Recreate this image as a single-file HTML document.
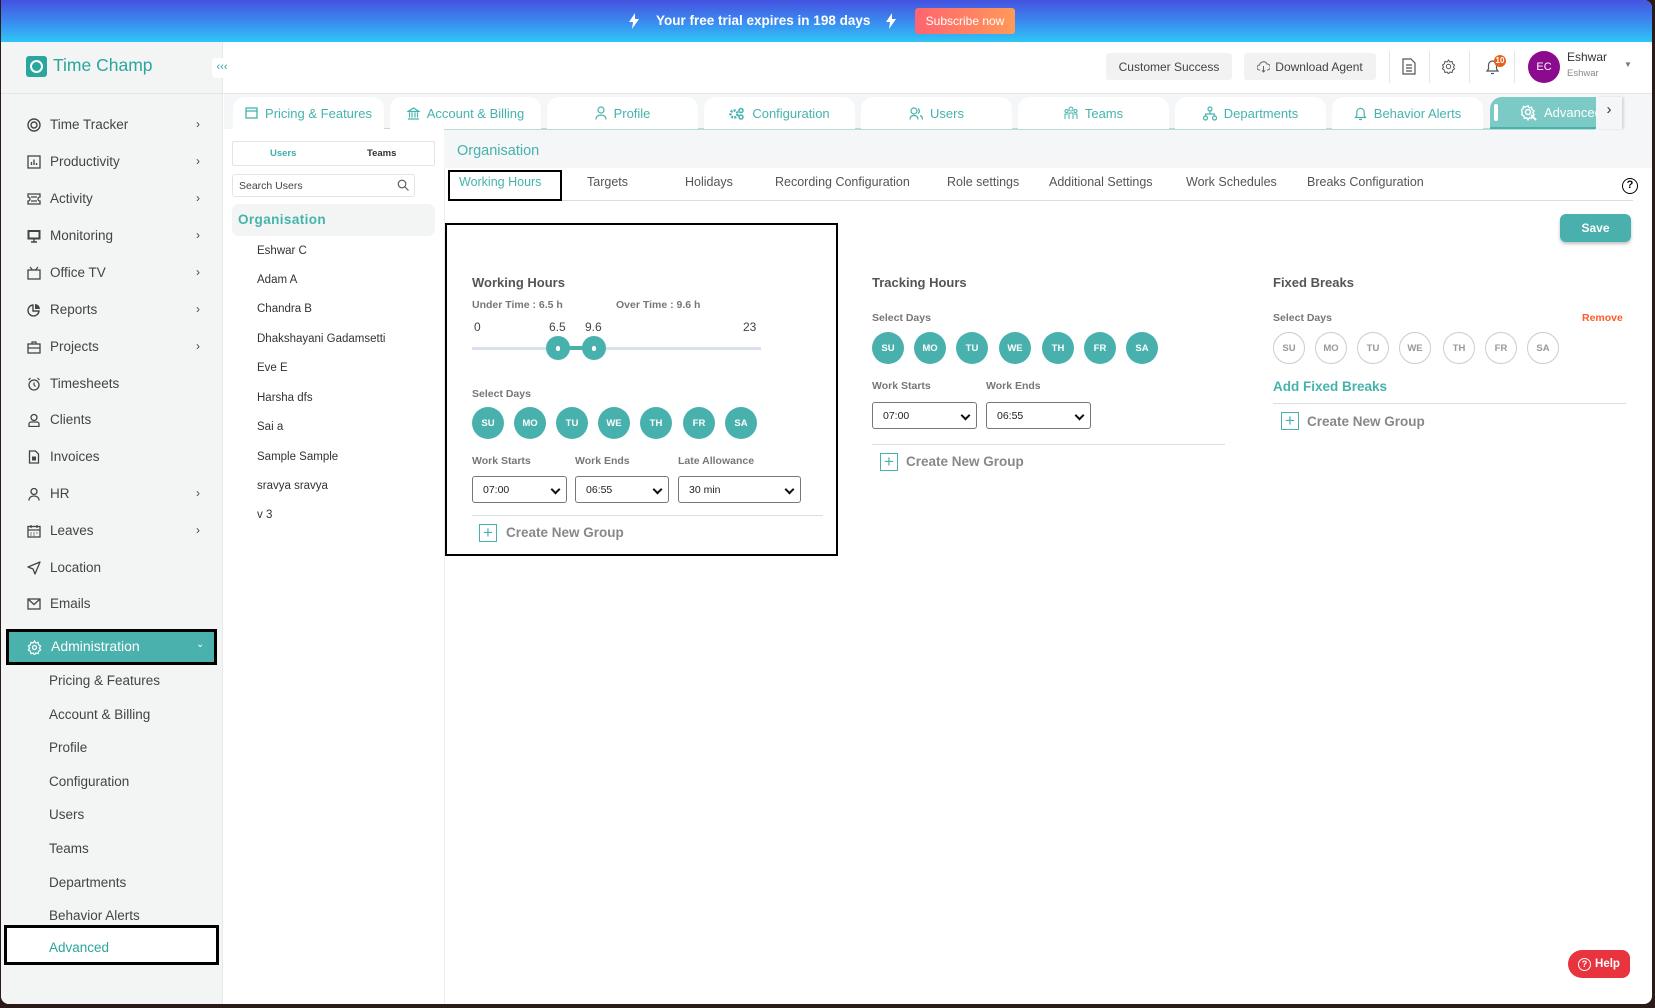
<!DOCTYPE html>
<html><head><meta charset="utf-8"><style>
*{box-sizing:border-box;margin:0;padding:0}
body{width:1655px;height:1008px;background:#2a1a18;font-family:"Liberation Sans",sans-serif;overflow:hidden;position:relative}
#app{position:absolute;left:1px;top:0;width:1651px;height:1004px;background:#fff;border-radius:0 8px 8px 8px;overflow:hidden}
.a{position:absolute;white-space:nowrap}
.banner{left:0;top:0;width:1651px;height:42px;background:linear-gradient(180deg,#4552e0 0%,#3a8ef0 55%,#2ec6f6 100%)}
.side{left:0;top:42px;width:222px;height:962px;background:#f3f4f4;border-right:1px solid #e8eaea}
.nav{left:49px;font-size:13.5px;color:#444}
.ico{left:26px;width:14px;height:14px}
.chev{left:195px;font-size:12px;color:#444}
.sub{left:48px;font-size:13.5px;color:#444}
.tab{top:97px;height:32px;width:151px;background:#fff;border-radius:12px 12px 0 0;color:#45b3ad;font-size:13px;display:flex;align-items:center;justify-content:center;gap:7px}
.st{top:175px;font-size:12.5px;color:#555}
.lbl{font-size:10.5px;color:#777;font-weight:bold}
.h{font-size:13px;color:#555;font-weight:bold}
.day{width:32px;height:32px;border-radius:50%;background:#49b1ad;color:#fff;font-size:9.5px;font-weight:bold;display:flex;align-items:center;justify-content:center}
.dayo{width:32px;height:32px;border-radius:50%;border:1.3px solid #ccc;color:#999;font-size:9.5px;font-weight:bold;display:flex;align-items:center;justify-content:center}
.sel{height:27px;border:1px solid #777;border-radius:3px;font-size:10.5px;color:#222;padding-left:10px;display:flex;align-items:center}
.sel:after{content:"";position:absolute;right:7px;top:9px;width:5px;height:5px;border-right:2px solid #111;border-bottom:2px solid #111;transform:rotate(45deg)}
.cng{font-size:13.5px;color:#888;font-weight:bold}
.plus{width:18px;height:18px;border:1.3px solid #49b1ad;color:#49b1ad;font-size:17px;line-height:15px;text-align:center}
.name{left:256px;font-size:11.5px;color:#333}
</style></head><body><div id="app">
<div class="a banner"></div>
<svg class="a" style="left:627px;top:13px" width="12" height="16" viewBox="0 0 12 16"><path d="M7 0L1 9h4l-1 7 7-10H7z" fill="#fff"/></svg>
<div class="a" style="left:655px;top:13px;color:#fff;font-weight:bold;font-size:13.5px">Your free trial expires in 198 days</div>
<svg class="a" style="left:884px;top:13px" width="12" height="16" viewBox="0 0 12 16"><path d="M7 0L1 9h4l-1 7 7-10H7z" fill="#fff"/></svg>
<div class="a" style="left:914px;top:8px;width:100px;height:26px;border-radius:3px;background:linear-gradient(90deg,#ff6470,#ff9a58);color:#fff;font-size:12px;display:flex;align-items:center;justify-content:center">Subscribe now</div>

<div class="a side"></div>
<div class="a" style="left:0;top:93px;width:1651px;height:1px;background:#e4e6e6"></div>
<div class="a" style="left:25px;top:56px;width:21px;height:21px;background:#2aa69f;border-radius:3px"></div>
<div class="a" style="left:29px;top:60px;width:13px;height:13px;border:2px solid #fff;border-radius:50%"></div>
<div class="a" style="left:52px;top:55px;font-size:17.5px;color:#2aa69f">Time Champ</div>
<div class="a" style="left:211px;top:58px;width:20px;height:20px;background:#fff;border-radius:4px;color:#2aa69f;font-size:11px;text-align:center;line-height:19px">&lsaquo;&lsaquo;&lsaquo;</div>

<div class="a" style="left:1105px;top:53px;width:126px;height:27px;background:#f2f2f2;border-radius:3px;font-size:12px;color:#444;display:flex;align-items:center;justify-content:center">Customer Success</div>
<div class="a" style="left:1243px;top:53px;width:132px;height:27px;background:#f2f2f2;border-radius:3px;font-size:12px;color:#444;display:flex;align-items:center;justify-content:center;gap:5px"><svg width="13" height="12" viewBox="0 0 13 12"><path d="M3 9H2.5a2.5 2.5 0 010-5 4 4 0 017.5-1 2.5 2.5 0 01.5 6H10M6.5 5v6M4.8 9.3l1.7 1.7 1.7-1.7" stroke="#666" fill="none"/></svg>Download Agent</div>
<div class="a" style="left:1388px;top:51px;width:1px;height:32px;background:#e5e5e5"></div>
<svg class="a" style="left:1401px;top:58px" width="14" height="17" viewBox="0 0 14 17"><path d="M1 1h8l4 4v11H1z M4 7h6M4 10h6M4 13h6" stroke="#555" fill="none" stroke-width="1.2"/></svg>
<div class="a" style="left:1428px;top:51px;width:1px;height:32px;background:#e5e5e5"></div>
<svg class="a" style="left:1440px;top:59px" width="15" height="15" viewBox="0 0 15 15"><circle cx="7.5" cy="7.5" r="2.2" stroke="#555" fill="none"/><path d="M7.5 1l1.3 2 2.3-.5.5 2.3 2 1.3-1.2 1.9 1.2 1.9-2 1.3-.5 2.3-2.3-.5-1.3 2-1.3-2-2.3.5-.5-2.3-2-1.3 1.2-1.9L1.4 6.1l2-1.3.5-2.3 2.3.5z" stroke="#555" fill="none"/></svg>
<div class="a" style="left:1468px;top:51px;width:1px;height:32px;background:#e5e5e5"></div>
<svg class="a" style="left:1484px;top:58px" width="15" height="18" viewBox="0 0 15 18"><path d="M2 13h11l-1.5-2V7a4 4 0 00-8 0v4z M6 15.5h3" stroke="#555" fill="none" stroke-width="1.2"/></svg>
<div class="a" style="left:1493px;top:55px;width:12px;height:12px;border-radius:50%;background:#e8601c;color:#fff;font-size:8px;font-weight:bold;text-align:center;line-height:12px">10</div>
<div class="a" style="left:1513px;top:51px;width:1px;height:32px;background:#e5e5e5"></div>
<div class="a" style="left:1527px;top:51px;width:32px;height:32px;border-radius:50%;background:#8b0a8e;color:#fff;font-size:11px;text-align:center;line-height:32px">EC</div>
<div class="a" style="left:1566px;top:50px;font-size:12px;color:#333">Eshwar</div>
<div class="a" style="left:1566px;top:68px;font-size:9.5px;color:#888">Eshwar</div>
<div class="a" style="left:1623px;top:60px;font-size:8px;color:#777">&#9660;</div>

<svg class="a ico" style="top:118px" viewBox="0 0 14 14"><circle cx="7" cy="7" r="6" stroke="#444" fill="none" stroke-width="1.4"/><circle cx="7" cy="7" r="3" stroke="#444" fill="none" stroke-width="1.4"/></svg><div class="a nav" style="top:117px">Time Tracker</div><div class="a chev" style="top:117px">&rsaquo;</div>
<svg class="a ico" style="top:155px" viewBox="0 0 14 14"><rect x="1" y="1" width="12" height="12" stroke="#444" fill="none" stroke-width="1.3"/><path d="M4.5 10V7M7 10V4.5M9.5 10V8" stroke="#444" stroke-width="1.3"/></svg><div class="a nav" style="top:154px">Productivity</div><div class="a chev" style="top:154px">&rsaquo;</div>
<svg class="a ico" style="top:192px" viewBox="0 0 14 14"><path d="M1 2h12v3a2 2 0 000 4v3H1V9a2 2 0 000-4zM4 5h6M4 9h6" stroke="#444" fill="none" stroke-width="1.3"/></svg><div class="a nav" style="top:191px">Activity</div><div class="a chev" style="top:191px">&rsaquo;</div>
<svg class="a ico" style="top:229px" viewBox="0 0 14 14"><rect x="1" y="1.5" width="12" height="8.5" stroke="#444" fill="#444" stroke-width="1"/><rect x="2.5" y="3" width="9" height="5.5" fill="#f3f4f4"/><path d="M7 10v2.5M4 13h6" stroke="#444" stroke-width="1.4"/></svg><div class="a nav" style="top:228px">Monitoring</div><div class="a chev" style="top:228px">&rsaquo;</div>
<svg class="a ico" style="top:266px" viewBox="0 0 14 14"><rect x="1" y="4" width="12" height="9" stroke="#444" fill="none" stroke-width="1.3"/><path d="M3 1l2.5 3M11 1L8.5 4" stroke="#444" stroke-width="1.2"/></svg><div class="a nav" style="top:265px">Office TV</div><div class="a chev" style="top:265px">&rsaquo;</div>
<svg class="a ico" style="top:303px" viewBox="0 0 14 14"><path d="M6 2a5.5 5.5 0 106 6H6z" stroke="#444" fill="none" stroke-width="1.4"/><path d="M8 1v5h5a5 5 0 00-5-5z" fill="#444"/></svg><div class="a nav" style="top:302px">Reports</div><div class="a chev" style="top:302px">&rsaquo;</div>
<svg class="a ico" style="top:340px" viewBox="0 0 14 14"><rect x="1" y="4" width="12" height="9" stroke="#444" fill="none" stroke-width="1.3"/><path d="M5 4V2h4v2M1 8h12" stroke="#444" stroke-width="1.2" fill="none"/></svg><div class="a nav" style="top:339px">Projects</div><div class="a chev" style="top:339px">&rsaquo;</div>
<svg class="a ico" style="top:377px" viewBox="0 0 14 14"><circle cx="7" cy="8" r="5" stroke="#444" fill="none" stroke-width="1.3"/><path d="M7 5.5V8l1.5 1.5M1.5 3L3.5 1M12.5 3L10.5 1" stroke="#444" stroke-width="1.2" fill="none"/></svg><div class="a nav" style="top:376px">Timesheets</div>
<svg class="a ico" style="top:413px" viewBox="0 0 14 14"><circle cx="7" cy="4.5" r="3" stroke="#444" fill="none" stroke-width="1.3"/><path d="M2 13.5V11a2 2 0 012-2h6a2 2 0 012 2v2.5z" stroke="#444" fill="none" stroke-width="1.3"/></svg><div class="a nav" style="top:412px">Clients</div>
<svg class="a ico" style="top:450px" viewBox="0 0 14 14"><path d="M2.5 1h6l3 3v9h-9z" stroke="#444" fill="none" stroke-width="1.3"/><rect x="5" y="6.5" width="4" height="4" fill="#444"/></svg><div class="a nav" style="top:449px">Invoices</div>
<svg class="a ico" style="top:487px" viewBox="0 0 14 14"><circle cx="7" cy="4.5" r="3" stroke="#444" fill="none" stroke-width="1.3"/><path d="M2 13.5c0-3 2.2-4.5 5-4.5s5 1.5 5 4.5" stroke="#444" fill="none" stroke-width="1.3"/></svg><div class="a nav" style="top:486px">HR</div><div class="a chev" style="top:486px">&rsaquo;</div>
<svg class="a ico" style="top:524px" viewBox="0 0 14 14"><rect x="1" y="2.5" width="12" height="10.5" stroke="#444" fill="none" stroke-width="1.3"/><path d="M1 6h12M4 1v3M10 1v3M3.5 9h1M6.5 9h1M9.5 9h1M3.5 11h1M6.5 11h1" stroke="#444" stroke-width="1.2"/></svg><div class="a nav" style="top:523px">Leaves</div><div class="a chev" style="top:523px">&rsaquo;</div>
<svg class="a ico" style="top:561px" viewBox="0 0 14 14"><path d="M13 1L1 6l5 2 2 5z" stroke="#444" fill="none" stroke-width="1.3" stroke-linejoin="round"/></svg><div class="a nav" style="top:560px">Location</div>
<svg class="a ico" style="top:597px" viewBox="0 0 14 14"><rect x="1" y="2" width="12" height="10" stroke="#444" fill="none" stroke-width="1.3"/><path d="M1 2l6 5.5L13 2" stroke="#444" fill="none" stroke-width="1.3"/></svg><div class="a nav" style="top:596px">Emails</div>

<div class="a" style="left:5px;top:629px;width:211px;height:36px;background:#4bb1ad;border:3px solid #000"></div>
<svg class="a" style="left:26px;top:640px" width="15" height="15" viewBox="0 0 15 15"><circle cx="7.5" cy="7.5" r="2" stroke="#fff" fill="none" stroke-width="1.3"/><path d="M7.5 1l1.3 2 2.3-.5.5 2.3 2 1.3-1.2 1.9 1.2 1.9-2 1.3-.5 2.3-2.3-.5-1.3 2-1.3-2-2.3.5-.5-2.3-2-1.3 1.2-1.9L1.4 6.1l2-1.3.5-2.3 2.3.5z" stroke="#fff" fill="none" stroke-width="1.2"/></svg>
<div class="a" style="left:50px;top:638px;font-size:14px;color:#fff">Administration</div>
<div class="a" style="left:195px;top:639px;font-size:10px;color:#fff">&#8964;</div>
<div class="a sub" style="top:673px">Pricing &amp; Features</div>
<div class="a sub" style="top:707px">Account &amp; Billing</div>
<div class="a sub" style="top:740px">Profile</div>
<div class="a sub" style="top:774px">Configuration</div>
<div class="a sub" style="top:807px">Users</div>
<div class="a sub" style="top:841px">Teams</div>
<div class="a sub" style="top:875px">Departments</div>
<div class="a sub" style="top:908px">Behavior Alerts</div>
<div class="a" style="left:3px;top:925px;width:215px;height:40px;background:#fff;border:3px solid #000"></div>
<div class="a sub" style="top:940px;color:#2aa69f">Advanced</div>

<div class="a" style="left:223px;top:94px;width:1428px;height:74px;background:#f4f6f7"></div>
<div class="a" style="left:232px;top:128px;width:1362px;height:1.5px;background:#b9dcda"></div>
<div class="a tab" style="left:232px"><svg width="13" height="12" viewBox="0 0 13 12"><rect x="1" y="1" width="11" height="10" stroke="#45b3ad" fill="none" stroke-width="1.3"/><path d="M1 4h11" stroke="#45b3ad" stroke-width="1.3"/></svg>Pricing &amp; Features</div>
<div class="a tab" style="left:389px"><svg width="13" height="13" viewBox="0 0 13 13"><path d="M1 4.5L6.5 1 12 4.5zM2.5 5.5v5M5 5.5v5M8 5.5v5M10.5 5.5v5M1 12h11" stroke="#45b3ad" fill="none" stroke-width="1.2"/></svg>Account &amp; Billing</div>
<div class="a tab" style="left:546px"><svg width="12" height="14" viewBox="0 0 12 14"><circle cx="6" cy="4" r="3" stroke="#45b3ad" fill="none" stroke-width="1.2"/><path d="M1 13.5c0-3 2.2-4.5 5-4.5s5 1.5 5 4.5" stroke="#45b3ad" fill="none" stroke-width="1.2"/></svg>Profile</div>
<div class="a tab" style="left:703px"><svg width="16" height="13" viewBox="0 0 16 13"><circle cx="5" cy="7" r="3.5" stroke="#45b3ad" fill="none" stroke-width="2.5" stroke-dasharray="2 1.2"/><circle cx="12" cy="3.5" r="2" stroke="#45b3ad" fill="none" stroke-width="1.5"/><circle cx="12" cy="10" r="2" stroke="#45b3ad" fill="none" stroke-width="1.5"/></svg>Configuration</div>
<div class="a tab" style="left:860px"><svg width="14" height="13" viewBox="0 0 14 13"><circle cx="5" cy="4" r="3" stroke="#45b3ad" fill="none" stroke-width="1.2"/><path d="M1 12.5c0-3 2-4 4-4s4 1 4 4M9 1.5a3 3 0 010 5M11 8.5c1.5.5 2.5 1.8 2.5 4" stroke="#45b3ad" fill="none" stroke-width="1.2"/></svg>Users</div>
<div class="a tab" style="left:1017px"><svg width="14" height="14" viewBox="0 0 14 14"><circle cx="7" cy="3" r="2" stroke="#45b3ad" fill="none"/><circle cx="2.5" cy="5" r="1.5" stroke="#45b3ad" fill="none"/><circle cx="11.5" cy="5" r="1.5" stroke="#45b3ad" fill="none"/><path d="M5 13V7h4v6M1 13V8h3M13 13V8h-3" stroke="#45b3ad" fill="none"/></svg>Teams</div>
<div class="a tab" style="left:1174px"><svg width="14" height="15" viewBox="0 0 14 15"><circle cx="7" cy="3" r="2" stroke="#45b3ad" fill="none" stroke-width="1.2"/><circle cx="2.5" cy="12" r="2" stroke="#45b3ad" fill="none" stroke-width="1.2"/><circle cx="11.5" cy="12" r="2" stroke="#45b3ad" fill="none" stroke-width="1.2"/><path d="M7 5v3M2.5 10V8h9v2" stroke="#45b3ad" fill="none" stroke-width="1.2"/></svg>Departments</div>
<div class="a tab" style="left:1331px"><svg width="13" height="15" viewBox="0 0 13 15"><path d="M1.5 11.5h10l-1.3-1.8V6a3.7 3.7 0 00-7.4 0v3.7zM5 13.5h3" stroke="#45b3ad" fill="none" stroke-width="1.2"/></svg>Behavior Alerts</div>
<div class="a" style="left:1489px;top:97px;width:106px;height:32px;background:#7ccac6;border-radius:12px 0 0 0;overflow:hidden;border-bottom:2px solid #4bb1ad">
<div class="a" style="left:4px;top:7px;width:4px;height:17px;background:#fff;border-radius:2px"></div>
<svg class="a" style="left:31px;top:8px" width="16" height="16" viewBox="0 0 16 16"><circle cx="7" cy="7" r="2.5" stroke="#fff" fill="none" stroke-width="1.5"/><path d="M7 .8l1.3 2 2.3-.5.5 2.3 2 1.3-1.2 1.9 1.2 1.9-2 1.3-.5 2.3-2.3-.5-1.3 2-1.3-2-2.3.5-.5-2.3-2-1.3L1.2 7 0 5.1l2-1.3.5-2.3 2.3.5z" stroke="#fff" fill="none" stroke-width="1.4"/><path d="M10 10l5 5" stroke="#fff" stroke-width="2"/></svg>
<div class="a" style="left:54px;top:8px;color:#fff;font-size:13px">Advanced</div></div>
<div class="a" style="left:1595px;top:97px;width:26px;height:32px;background:#f4f6f7;box-shadow:2px 0 2px rgba(0,0,0,.12);font-size:15px;color:#333;text-align:center;line-height:26px">&rsaquo;</div>

<div class="a" style="left:443px;top:168px;width:1px;height:836px;background:#eceeee"></div>
<div class="a" style="left:223px;top:129px;width:220px;height:875px;background:#fff"></div>
<div class="a" style="left:231px;top:141px;width:203px;height:25px;border:1px solid #e3e5e5;border-radius:2px"></div>
<div class="a" style="left:269px;top:148px;font-size:9.5px;color:#3fb0aa;font-weight:bold">Users</div>
<div class="a" style="left:366px;top:148px;font-size:9.5px;color:#333;font-weight:bold">Teams</div>
<div class="a" style="left:231px;top:174px;width:183px;height:23px;border:1px solid #e3e5e5;border-radius:3px"></div>
<div class="a" style="left:238px;top:180px;font-size:10.5px;color:#444">Search Users</div>
<svg class="a" style="left:396px;top:179px" width="12" height="12" viewBox="0 0 12 12"><circle cx="5" cy="5" r="3.8" stroke="#555" fill="none" stroke-width="1.1"/><path d="M8 8l3.5 3.5" stroke="#555" stroke-width="1.1"/></svg>
<div class="a" style="left:231px;top:204px;width:203px;height:32px;background:#f3f5f5;border-radius:7px"></div>
<div class="a" style="left:237px;top:212px;font-size:13.5px;color:#45b3ad;font-weight:bold;letter-spacing:.4px">Organisation</div>
<div class="a name" style="top:245px">Eshwar C</div>
<div class="a name" style="top:274px">Adam A</div>
<div class="a name" style="top:303px">Chandra B</div>
<div class="a name" style="top:333px">Dhakshayani Gadamsetti</div>
<div class="a name" style="top:362px">Eve E</div>
<div class="a name" style="top:392px">Harsha dfs</div>
<div class="a name" style="top:421px">Sai a</div>
<div class="a name" style="top:451px">Sample Sample</div>
<div class="a name" style="top:480px">sravya sravya</div>
<div class="a name" style="top:509px">v 3</div>

<div class="a" style="left:456px;top:143px;font-size:14.5px;color:#45b3ad">Organisation</div>
<div class="a" style="left:447px;top:200px;width:1185px;height:1px;background:#ddd"></div>
<div class="a" style="left:447px;top:170px;width:114px;height:31px;border:2px solid #000"></div>
<div class="a st" style="left:458px;color:#45b3ad">Working Hours</div>
<div class="a st" style="left:586px">Targets</div>
<div class="a st" style="left:684px">Holidays</div>
<div class="a st" style="left:774px">Recording Configuration</div>
<div class="a st" style="left:946px">Role settings</div>
<div class="a st" style="left:1048px">Additional Settings</div>
<div class="a st" style="left:1185px">Work Schedules</div>
<div class="a st" style="left:1306px">Breaks Configuration</div>
<div class="a" style="left:1621px;top:178px;width:16px;height:16px;border:1.6px solid #000;border-radius:50%;font-size:11px;font-weight:bold;text-align:center;line-height:13px">?</div>

<div class="a" style="left:1559px;top:214px;width:71px;height:28px;background:#4ab0ae;border-radius:6px;box-shadow:0 2px 3px rgba(0,0,0,.25);color:#fff;font-size:12px;font-weight:bold;text-align:center;line-height:28px">Save</div>

<div class="a" style="left:444px;top:223px;width:393px;height:333px;border:2.5px solid #000"></div>
<div class="a h" style="left:471px;top:275px">Working Hours</div>
<div class="a lbl" style="left:471px;top:299px">Under Time : 6.5 h</div>
<div class="a lbl" style="left:615px;top:299px">Over Time : 9.6 h</div>
<div class="a" style="left:473px;top:320px;font-size:12px;color:#444">0</div>
<div class="a" style="left:548px;top:320px;font-size:12px;color:#444">6.5</div>
<div class="a" style="left:584px;top:320px;font-size:12px;color:#444">9.6</div>
<div class="a" style="left:742px;top:320px;font-size:12px;color:#444">23</div>
<div class="a" style="left:471px;top:347px;width:289px;height:3px;background:#dbe0ef"></div>
<div class="a" style="left:557px;top:346px;width:36px;height:4px;background:#49b1ad"></div>
<div class="a" style="left:545px;top:336px;width:24px;height:24px;border-radius:50%;background:#49b1ad"></div>
<div class="a" style="left:555px;top:346px;width:4px;height:5px;border-radius:2px;background:#fff"></div>
<div class="a" style="left:581px;top:336px;width:24px;height:24px;border-radius:50%;background:#49b1ad"></div>
<div class="a" style="left:591px;top:346px;width:4px;height:5px;border-radius:2px;background:#fff"></div>
<div class="a lbl" style="left:471px;top:388px">Select Days</div>
<div class="a day" style="left:471px;top:407px">SU</div><div class="a day" style="left:513px;top:407px">MO</div><div class="a day" style="left:555px;top:407px">TU</div><div class="a day" style="left:597px;top:407px">WE</div><div class="a day" style="left:639px;top:407px">TH</div><div class="a day" style="left:682px;top:407px">FR</div><div class="a day" style="left:724px;top:407px">SA</div>
<div class="a lbl" style="left:471px;top:455px">Work Starts</div>
<div class="a lbl" style="left:574px;top:455px">Work Ends</div>
<div class="a lbl" style="left:677px;top:455px">Late Allowance</div>
<div class="a sel" style="left:471px;top:476px;width:95px">07:00</div>
<div class="a sel" style="left:574px;top:476px;width:94px">06:55</div>
<div class="a sel" style="left:677px;top:476px;width:123px">30 min</div>
<div class="a" style="left:471px;top:515px;width:351px;height:1px;background:#ddd"></div>
<div class="a plus" style="left:478px;top:524px">+</div>
<div class="a cng" style="left:505px;top:525px">Create New Group</div>

<div class="a h" style="left:871px;top:275px">Tracking Hours</div>
<div class="a lbl" style="left:871px;top:312px">Select Days</div>
<div class="a day" style="left:871px;top:332px">SU</div><div class="a day" style="left:913px;top:332px">MO</div><div class="a day" style="left:955px;top:332px">TU</div><div class="a day" style="left:998px;top:332px">WE</div><div class="a day" style="left:1041px;top:332px">TH</div><div class="a day" style="left:1083px;top:332px">FR</div><div class="a day" style="left:1125px;top:332px">SA</div>
<div class="a lbl" style="left:871px;top:380px">Work Starts</div>
<div class="a lbl" style="left:985px;top:380px">Work Ends</div>
<div class="a sel" style="left:871px;top:402px;width:105px">07:00</div>
<div class="a sel" style="left:985px;top:402px;width:105px">06:55</div>
<div class="a" style="left:871px;top:444px;width:353px;height:1px;background:#ddd"></div>
<div class="a plus" style="left:879px;top:453px">+</div>
<div class="a cng" style="left:905px;top:454px">Create New Group</div>

<div class="a h" style="left:1272px;top:275px">Fixed Breaks</div>
<div class="a lbl" style="left:1272px;top:312px">Select Days</div>
<div class="a" style="left:1581px;top:312px;font-size:10.5px;color:#ff5a2a;font-weight:bold">Remove</div>
<div class="a dayo" style="left:1272px;top:332px">SU</div><div class="a dayo" style="left:1314px;top:332px">MO</div><div class="a dayo" style="left:1356px;top:332px">TU</div><div class="a dayo" style="left:1398px;top:332px">WE</div><div class="a dayo" style="left:1442px;top:332px">TH</div><div class="a dayo" style="left:1484px;top:332px">FR</div><div class="a dayo" style="left:1526px;top:332px">SA</div>
<div class="a" style="left:1272px;top:379px;font-size:13.5px;color:#45b3ad;font-weight:bold">Add Fixed Breaks</div>
<div class="a" style="left:1272px;top:403px;width:353px;height:1px;background:#ddd"></div>
<div class="a plus" style="left:1280px;top:412px">+</div>
<div class="a cng" style="left:1306px;top:414px">Create New Group</div>

<div class="a" style="left:1567px;top:950px;width:62px;height:28px;background:#e8343f;border-radius:14px 8px 8px 14px;color:#fff;font-size:11.5px;font-weight:bold;display:flex;align-items:center;justify-content:center;gap:4px"><span style="width:13px;height:13px;border:1.3px solid #fff;border-radius:50%;font-size:9px;line-height:11px;text-align:center">?</span>Help</div>
</div></body></html>
